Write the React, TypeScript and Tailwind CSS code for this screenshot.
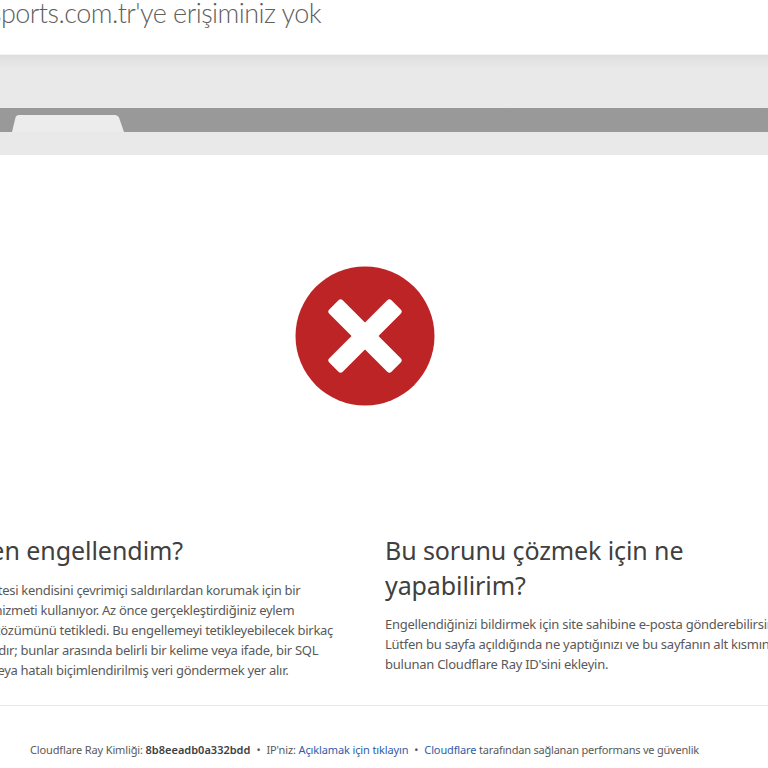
import React from "react";

const font = "font-['Noto_Sans','Open_Sans','Liberation_Sans',sans-serif]";

function ErrorIcon() {
  return (
    <svg width="140" height="140" viewBox="0 0 140 140" className="block">
      <circle cx="70" cy="70" r="69.5" fill="#bd2426" />
      <rect x="26" y="60.5" width="88" height="19" rx="3" fill="#ffffff" transform="rotate(45 70 70)" />
      <rect x="26" y="60.5" width="88" height="19" rx="3" fill="#ffffff" transform="rotate(-45 70 70)" />
    </svg>
  );
}

export default function App() {
  return (
    <div className={`h-[768px] w-[768px] overflow-hidden bg-white ${font}`}>
      {/* Title */}
      <div className="h-[55px] overflow-hidden border-b border-[#f4f4f4]">
        <h1 className="-ml-[10px] -mt-[5px] whitespace-nowrap font-['Lato',sans-serif] text-[27px] font-light leading-[36px] tracking-[-0.54px] text-[#5f5f5f]">
          sports.com.tr'ye erişiminiz yok
        </h1>
      </div>

      {/* Browser illustration */}
      <div className="bg-[#e9e9e9] bg-gradient-to-b from-[#dedede] to-[#e9e9e9] to-[14px] pt-[53px]">
        <div className="h-[24px] bg-[#999999] pl-[12px] pt-[7px]">
          <svg width="112" height="17" viewBox="0 0 112 17" className="block">
            <path d="M0 17 L3.5 2.5 Q4 0 7 0 L103 0 Q106 0 107 2.5 L112 17 Z" fill="#ececec" />
          </svg>
        </div>
        <div className="h-[23px]" />
      </div>

      {/* Icon */}
      <div className="flex h-[377px] justify-center pr-[39px] pt-[111px]">
        <ErrorIcon />
      </div>

      {/* Explanation columns */}
      <div className="-ml-[58px] grid h-[174px] w-[960px] grid-cols-[443px_1fr] border-b border-[#e6e6e6] pt-[1px]">
        <div>
          <h2 className="h-[33px] whitespace-nowrap text-[25px] leading-[35px] tracking-[-0.05px] text-[#404040]">Neden engellendim?</h2>
          <p className="mt-[14px] whitespace-nowrap text-[13px] leading-[20px] tracking-[-0.29px] text-[#595959]">
            Bu web sitesi kendisini çevrimiçi saldırılardan korumak için bir
            <br />
            güvenlik hizmeti kullanıyor. Az önce gerçekleştirdiğiniz eylem
            <br />
            güvenlik çözümünü tetikledi. Bu engellemeyi tetikleyebilecek birkaç
            <br />
            eylem vardır; bunlar arasında belirli bir kelime veya ifade, bir SQL
            <br />
            komutu veya hatalı biçimlendirilmiş veri göndermek yer alır.
          </p>
        </div>
        <div>
          <h2 className="whitespace-nowrap text-[25px] leading-[35px] tracking-[-0.1px] text-[#404040]">
            Bu sorunu çözmek için ne
            <br />
            yapabilirim?
          </h2>
          <p className="mt-[11px] whitespace-nowrap text-[13px] leading-[20px] tracking-[-0.25px] text-[#595959]">
            Engellendiğinizi bildirmek için site sahibine e-posta gönderebilirsiniz.
            <br />
            Lütfen bu sayfa açıldığında ne yaptığınızı ve bu sayfanın alt kısmında
            <br />
            bulunan Cloudflare Ray ID'sini ekleyin.
          </p>
        </div>
      </div>

      {/* Footer */}
      <div className="whitespace-nowrap pl-[30px] pt-[35px] text-[11px] leading-[17px] tracking-[-0.13px] text-[#595959]">
        Cloudflare Ray Kimliği: <strong className="font-semibold tracking-normal text-[#404040]">8b8eeadb0a332bdd</strong>
        <span className="mx-[6px]">•</span>
        IP'niz: <a className="text-[#2f5da8]">Açıklamak için tıklayın</a>
        <span className="mx-[6px]">•</span>
        <a className="text-[#2f5da8]">Cloudflare</a> <span className="tracking-[-0.21px]">tarafından sağlanan performans ve güvenlik</span>
      </div>
    </div>
  );
}
